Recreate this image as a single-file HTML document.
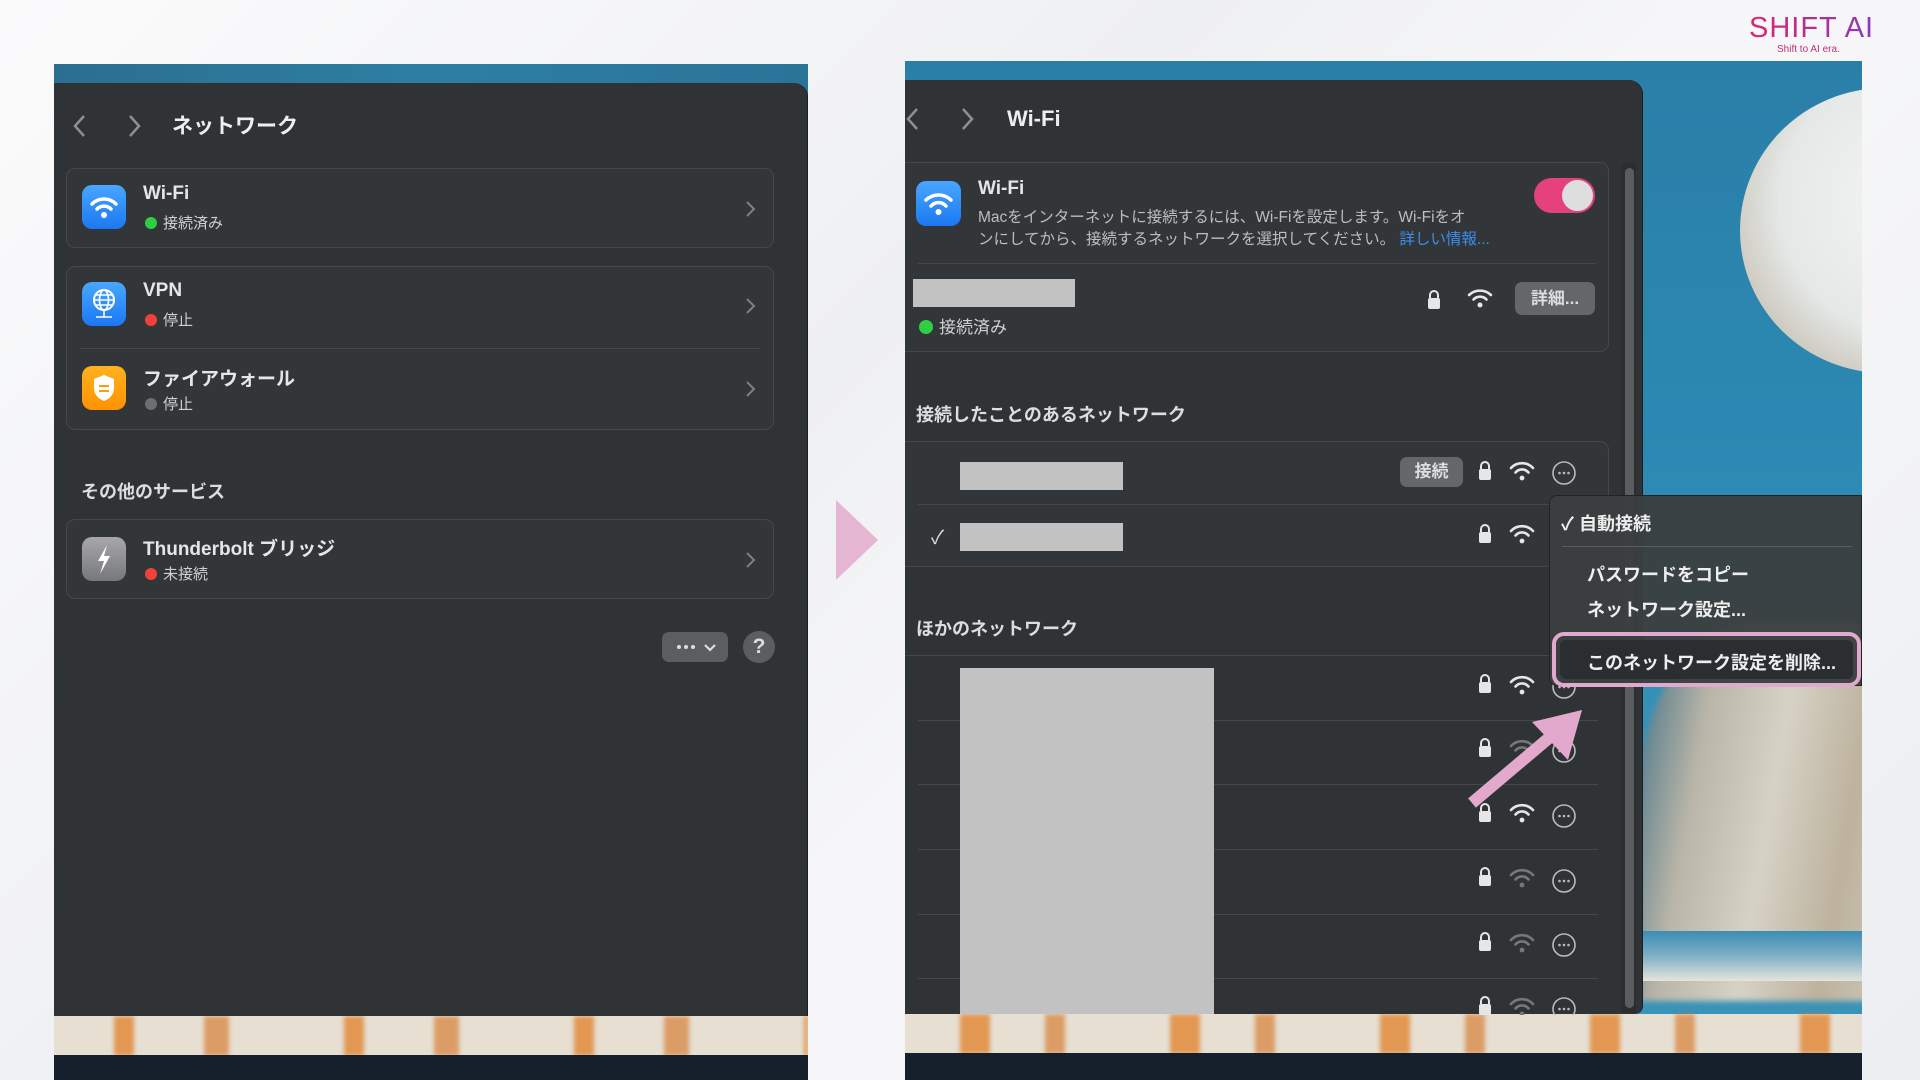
<!DOCTYPE html>
<html><head><meta charset="utf-8">
<style>
*{margin:0;padding:0;box-sizing:border-box}
body{width:1920px;height:1080px;overflow:hidden;position:relative;font-family:"Liberation Sans","Noto Sans CJK JP",sans-serif;background:linear-gradient(135deg,#fbfbfc 0%,#eff0f3 40%,#f7f7f9 60%,#eceef1 100%);color:#e6e6e6}
.abs{position:absolute}
.win{background:#303335;position:absolute}
.card{position:absolute;border:1px solid #45484a;border-radius:9px;background:#333638}
.t{position:absolute;white-space:nowrap}
.b{font-weight:bold}
.dot{display:inline-block;width:12px;height:12px;border-radius:50%;margin-right:6px;vertical-align:-1px}
.sep{position:absolute;height:1px;background:#45484a}
.gray{position:absolute;background:#c2c2c2}
.strip{background:linear-gradient(180deg,#e8e2d6 0%,#ddd5c6 50%,#c98a4a 100%);}
</style></head><body>

<!-- LEFT PANEL -->
<div class="abs" style="left:54px;top:64px;width:754px;height:1016px;background:#2a7395;overflow:hidden">
  <div class="abs" style="left:0;top:0;width:754px;height:20px;background:linear-gradient(90deg,#2b6f90,#2d7fa2,#2a7498)"></div>
  <div class="abs" style="left:0;top:952px;width:754px;height:40px;background:#e6dfd2"></div>
  <div class="abs" style="left:0;top:952px;width:754px;height:40px;background:repeating-linear-gradient(90deg,transparent 0 60px,rgba(224,128,40,.75) 60px 80px,transparent 80px 150px,rgba(214,112,30,.6) 150px 175px,transparent 175px 230px);filter:blur(2px)"></div>
  <div class="abs" style="left:0;top:991px;width:754px;height:25px;background:#15202c"></div>
</div>
<div class="win" style="left:54px;top:83px;width:754px;height:933px;border-top-right-radius:14px;border-right:1px solid #1c1d1e"></div>

<svg class="abs" style="left:70px;top:112px" width="80" height="28"><path d="M14 4 L5 14 L14 24" stroke="#8d8f91" stroke-width="2.5" fill="none"/><path d="M60 4 L69 14 L60 24" stroke="#8d8f91" stroke-width="2.5" fill="none"/></svg>
<div class="t b" style="left:172px;top:110px;font-size:21px;color:#eee">ネットワーク</div>

<div class="card" style="left:66px;top:168px;width:708px;height:80px"></div>
<svg class="abs" style="left:82px;top:185px" width="44" height="44"><defs><linearGradient id="bl" x1="0" y1="0" x2="0" y2="1"><stop offset="0" stop-color="#4aa6ff"/><stop offset="1" stop-color="#1b78f2"/></linearGradient></defs><rect width="44" height="44" rx="10" fill="url(#bl)"/><path d="M10 19 A17 17 0 0 1 34 19" stroke="#fff" stroke-width="3.5" fill="none" stroke-linecap="round"/><path d="M15 24 A10 10 0 0 1 29 24" stroke="#fff" stroke-width="3.5" fill="none" stroke-linecap="round"/><circle cx="22" cy="30" r="3" fill="#fff"/></svg>
<div class="t b" style="left:143px;top:183px;font-size:19px">Wi-Fi</div>
<div class="t" style="left:145px;top:212px;font-size:15px;color:#cfcfcf"><span class="dot" style="background:#2fcf45"></span>接続済み</div>
<svg class="abs" style="left:745px;top:200px" width="12" height="18"><path d="M2 2 L9 9 L2 16" stroke="#7d8082" stroke-width="2" fill="none"/></svg>

<div class="card" style="left:66px;top:266px;width:708px;height:164px"></div>
<div class="sep" style="left:80px;top:348px;width:680px"></div>
<svg class="abs" style="left:82px;top:282px" width="44" height="44"><rect width="44" height="44" rx="10" fill="url(#bl)"/><circle cx="22" cy="18" r="10" stroke="#fff" stroke-width="2" fill="none"/><ellipse cx="22" cy="18" rx="4.5" ry="10" stroke="#fff" stroke-width="1.6" fill="none"/><path d="M12 18 H32 M14 13 H30 M14 23 H30 M22 28 V35 M14 35 H30" stroke="#fff" stroke-width="1.6"/></svg>
<div class="t b" style="left:143px;top:280px;font-size:19px">VPN</div>
<div class="t" style="left:145px;top:309px;font-size:15px;color:#cfcfcf"><span class="dot" style="background:#f0423b"></span>停止</div>
<svg class="abs" style="left:745px;top:297px" width="12" height="18"><path d="M2 2 L9 9 L2 16" stroke="#7d8082" stroke-width="2" fill="none"/></svg>
<svg class="abs" style="left:82px;top:366px" width="44" height="44"><defs><linearGradient id="or" x1="0" y1="0" x2="0" y2="1"><stop offset="0" stop-color="#ffb21e"/><stop offset="1" stop-color="#ff9300"/></linearGradient></defs><rect width="44" height="44" rx="10" fill="url(#or)"/><path d="M22 9 L32 13 V22 C32 29 27 33 22 35 C17 33 12 29 12 22 V13 Z" fill="#fff"/><path d="M17 20 H27 M17 25 H27" stroke="#ff9d0a" stroke-width="2"/></svg>
<div class="t b" style="left:143px;top:364px;font-size:19px">ファイアウォール</div>
<div class="t" style="left:145px;top:393px;font-size:15px;color:#cfcfcf"><span class="dot" style="background:#6c6e70"></span>停止</div>
<svg class="abs" style="left:745px;top:380px" width="12" height="18"><path d="M2 2 L9 9 L2 16" stroke="#7d8082" stroke-width="2" fill="none"/></svg>

<div class="t b" style="left:81px;top:478px;font-size:18px;color:#ddd">その他のサービス</div>
<div class="card" style="left:66px;top:519px;width:708px;height:80px"></div>
<svg class="abs" style="left:82px;top:537px" width="44" height="44"><defs><linearGradient id="gr" x1="0" y1="0" x2="0" y2="1"><stop offset="0" stop-color="#a8a8aa"/><stop offset="1" stop-color="#77787a"/></linearGradient></defs><rect width="44" height="44" rx="10" fill="url(#gr)"/><path d="M25 8 L16 24 H22 L18 37 L28 19 H22 Z" fill="#fff"/></svg>
<div class="t b" style="left:143px;top:534px;font-size:19px">Thunderbolt ブリッジ</div>
<div class="t" style="left:145px;top:563px;font-size:15px;color:#cfcfcf"><span class="dot" style="background:#f0423b"></span>未接続</div>
<svg class="abs" style="left:745px;top:551px" width="12" height="18"><path d="M2 2 L9 9 L2 16" stroke="#7d8082" stroke-width="2" fill="none"/></svg>

<div class="abs" style="left:662px;top:632px;width:66px;height:30px;border-radius:7px;background:#5b5e60"></div>
<svg class="abs" style="left:662px;top:632px" width="66" height="30"><circle cx="17" cy="15" r="2" fill="#ddd"/><circle cx="24" cy="15" r="2" fill="#ddd"/><circle cx="31" cy="15" r="2" fill="#ddd"/><path d="M43 13 L48 18 L53 13" stroke="#ddd" stroke-width="2.2" fill="none"/></svg>
<div class="abs" style="left:743px;top:631px;width:32px;height:32px;border-radius:50%;background:#5b5e60;color:#ddd;font-size:21px;text-align:center;line-height:32px;font-weight:bold">?</div>

<svg class="abs" style="left:836px;top:500px" width="44" height="80"><path d="M0 0 L42 40 L0 80 Z" fill="#e4b6d1"/></svg>

<!-- RIGHT PANEL bg -->
<div class="abs" style="left:905px;top:61px;width:957px;height:1019px;background:linear-gradient(180deg,#2a7fa8 0%,#2c8cb6 50%,#3a93b8 70%);overflow:hidden">
  <div class="abs" style="left:835px;top:27px;width:290px;height:285px;border-radius:50%;background:radial-gradient(circle at 60% 40%,#f4f6f5 0%,#e4e8e6 55%,#c9c4b8 80%,#b3ab9c 100%)"></div>
  <div class="abs" style="left:735px;top:560px;width:260px;height:380px;background:linear-gradient(100deg,#3f6f85 0%,#b9b5a8 25%,#d6d2c6 50%,#bdb29d 75%,#cfcbbf 100%);border-radius:45% 0 0 0;filter:blur(3px)"></div>
  <div class="abs" style="left:735px;top:870px;width:240px;height:50px;background:linear-gradient(180deg,#3c8db5,#7fb0c4 50%,#e6e3dc)"></div>
  <div class="abs" style="left:0;top:953px;width:957px;height:40px;background:#e6dfd2"></div>
  <div class="abs" style="left:0;top:953px;width:957px;height:40px;background:repeating-linear-gradient(90deg,transparent 0 55px,rgba(224,128,40,.75) 55px 85px,transparent 85px 140px,rgba(214,112,30,.6) 140px 160px,transparent 160px 210px);filter:blur(2px)"></div>
  <div class="abs" style="left:0;top:992px;width:957px;height:27px;background:#15202c"></div>
</div>
<div class="win" style="left:905px;top:80px;width:738px;height:934px;border-top-right-radius:14px;border-bottom-right-radius:8px;border-right:1px solid #1c1d1e"></div>

<svg class="abs" style="left:903px;top:105px" width="90" height="28"><path d="M14 4 L5 14 L14 24" stroke="#8d8f91" stroke-width="2.5" fill="none"/><path d="M60 4 L69 14 L60 24" stroke="#8d8f91" stroke-width="2.5" fill="none"/></svg>
<div class="t b" style="left:1007px;top:106px;font-size:22px;color:#eee">Wi-Fi</div>

<div class="abs" style="left:1622px;top:163px;width:14px;height:850px;background:#2b2d2f"></div>
<div class="abs" style="left:1625px;top:168px;width:9px;height:840px;border-radius:5px;background:#5a5d5f"></div>

<div class="card" style="left:905px;top:162px;width:704px;height:190px;border-left:none;border-radius:0 9px 9px 0"></div>
<svg class="abs" style="left:916px;top:181px" width="45" height="45"><rect width="45" height="45" rx="10" fill="url(#bl)"/><path d="M10 19 A18 18 0 0 1 35 19" stroke="#fff" stroke-width="3.5" fill="none" stroke-linecap="round"/><path d="M15 25 A10 10 0 0 1 30 25" stroke="#fff" stroke-width="3.5" fill="none" stroke-linecap="round"/><circle cx="22.5" cy="31" r="3" fill="#fff"/></svg>
<div class="t b" style="left:978px;top:178px;font-size:19px">Wi-Fi</div>
<div class="t" style="left:978px;top:207px;font-size:15.5px;color:#bdbdbd;line-height:22px">Macをインターネットに接続するには、Wi-Fiを設定します。Wi-Fiをオ<br>ンにしてから、接続するネットワークを選択してください。 <span style="color:#3a8ef0">詳しい情報...</span></div>
<div class="abs" style="left:1534px;top:178px;width:61px;height:35px;border-radius:18px;background:#e5417c"></div>
<div class="abs" style="left:1562px;top:180px;width:31px;height:31px;border-radius:50%;background:#dedede"></div>
<div class="sep" style="left:918px;top:263px;width:678px"></div>
<div class="gray" style="left:913px;top:279px;width:162px;height:28px"></div>
<div class="t" style="left:919px;top:313px;font-size:17px;color:#cfcfcf"><span class="dot" style="background:#2fcf45;width:14px;height:14px"></span>接続済み</div>
<svg class="abs" style="left:1426px;top:288px" width="16" height="22"><path d="M4 10 V7 A4 4 0 0 1 12 7 V10" stroke="#e6e6e6" stroke-width="2" fill="none"/><rect x="2" y="10" width="12" height="11" rx="2" fill="#e6e6e6"/></svg>
<svg class="abs" style="left:1467px;top:287px" width="26" height="22"><path d="M2 8 A16 16 0 0 1 24 8" stroke="#e6e6e6" stroke-width="2.6" fill="none" stroke-linecap="round"/><path d="M6.5 12.5 A9 9 0 0 1 19.5 12.5" stroke="#e6e6e6" stroke-width="2.6" fill="none" stroke-linecap="round"/><circle cx="13" cy="18" r="2.5" fill="#e6e6e6"/></svg>
<div class="abs b" style="left:1515px;top:282px;width:80px;height:33px;border-radius:7px;background:#64676a;color:#ddd;font-size:17px;text-align:center;line-height:33px">詳細...</div>

<div class="t b" style="left:916px;top:401px;font-size:18px;color:#ddd">接続したことのあるネットワーク</div>
<div class="card" style="left:905px;top:441px;width:704px;height:126px;border-left:none;border-radius:0 9px 9px 0"></div>
<div class="gray" style="left:960px;top:462px;width:163px;height:28px"></div>
<div class="abs b" style="left:1400px;top:457px;width:63px;height:30px;border-radius:7px;background:#64676a;color:#ddd;font-size:17px;text-align:center;line-height:30px">接続</div>
<div class="sep" style="left:918px;top:504px;width:680px"></div>
<div class="t" style="left:931px;top:523px;font-size:19px;color:#ddd">✓</div>
<div class="gray" style="left:960px;top:523px;width:163px;height:28px"></div>

<div class="t b" style="left:916px;top:615px;font-size:18px;color:#ddd">ほかのネットワーク</div>
<div class="sep" style="left:905px;top:655px;width:705px"></div>
<div class="sep" style="left:918px;top:720px;width:680px"></div>
<div class="sep" style="left:918px;top:784px;width:680px"></div>
<div class="sep" style="left:918px;top:849px;width:680px"></div>
<div class="sep" style="left:918px;top:914px;width:680px"></div>
<div class="sep" style="left:918px;top:978px;width:680px"></div>
<div class="gray" style="left:960px;top:668px;width:254px;height:346px"></div>

<svg class="abs" style="left:1470px;top:455px" width="120" height="560">
 <defs>
  <g id="lk"><path d="M-4 -1 V-4 A4 4 0 0 1 4 -4 V-1" stroke="#e6e6e6" stroke-width="2" fill="none"/><rect x="-6" y="-1" width="12" height="11" rx="2" fill="#e6e6e6"/></g>
  <g id="wf"><path d="M-11 -3 A15 15 0 0 1 11 -3" stroke-width="2.6" fill="none" stroke-linecap="round"/><path d="M-6.5 1.5 A8.5 8.5 0 0 1 6.5 1.5" stroke-width="2.6" fill="none" stroke-linecap="round"/><circle cx="0" cy="7" r="2.4" stroke="none"/></g>
  <g id="mo"><circle r="11" stroke="#bbb" stroke-width="1.6" fill="none"/><circle cx="-4.5" r="1.3" fill="#bbb"/><circle r="1.3" fill="#bbb"/><circle cx="4.5" r="1.3" fill="#bbb"/></g>
 </defs>
 <use href="#lk" x="15" y="15"/><use href="#wf" x="52" y="16" stroke="#e6e6e6" fill="#e6e6e6"/><use href="#mo" x="94" y="18"/>
 <use href="#lk" x="15" y="78"/><use href="#wf" x="52" y="79" stroke="#e6e6e6" fill="#e6e6e6"/>
 <use href="#lk" x="15" y="228"/><use href="#wf" x="52" y="230" stroke="#e6e6e6" fill="#e6e6e6"/><use href="#mo" x="94" y="232"/>
 <use href="#lk" x="15" y="292"/><use href="#wf" x="52" y="294" stroke="#777" fill="#777"/><use href="#mo" x="94" y="296"/>
 <use href="#lk" x="15" y="357"/><use href="#wf" x="52" y="358" stroke="#e6e6e6" fill="#e6e6e6"/><use href="#mo" x="94" y="361"/>
 <use href="#lk" x="15" y="421"/><use href="#wf" x="52" y="423" stroke="#777" fill="#777"/><use href="#mo" x="94" y="426"/>
 <use href="#lk" x="15" y="486"/><use href="#wf" x="52" y="488" stroke="#777" fill="#777"/><use href="#mo" x="94" y="490"/>
 <use href="#lk" x="15" y="550"/><use href="#wf" x="52" y="552" stroke="#777" fill="#777"/><use href="#mo" x="94" y="554"/>
</svg>

<div class="abs" style="left:1549px;top:495px;width:313px;height:191px;background:rgba(58,62,64,0.96);border-radius:8px 0 0 8px;border:1px solid #222"></div>
<div class="t b" style="left:1561px;top:510px;font-size:18px;color:#eee">✓ 自動接続</div>
<div class="abs" style="left:1562px;top:546px;width:290px;height:1px;background:#5a5e60"></div>
<div class="t b" style="left:1587px;top:561px;font-size:18px;color:#eee">パスワードをコピー</div>
<div class="t b" style="left:1587px;top:596px;font-size:18px;color:#eee">ネットワーク設定...</div>
<div class="abs" style="left:1552px;top:632px;width:309px;height:55px;border:4px solid #e0a9cd;border-radius:12px"></div>
<div class="abs" style="left:1560px;top:640px;width:293px;height:39px;background:#2b2e30;border-radius:6px"></div>
<div class="t b" style="left:1587px;top:649px;font-size:18px;color:#eee">このネットワーク設定を削除...</div>

<svg class="abs" style="left:1460px;top:700px" width="140" height="115"><path d="M12 103 L96 32" stroke="#e2a9cc" stroke-width="12" stroke-linecap="butt"/><path d="M122 10 L72 22 L108 60 Z" fill="#e2a9cc"/></svg>

<div class="t" style="left:1749px;top:12px;font-size:29px;letter-spacing:1px;background:linear-gradient(90deg,#e0246e,#8a3ab8);-webkit-background-clip:text;background-clip:text;color:transparent">SHIFT AI</div>
<div class="t" style="left:1777px;top:44px;font-size:10px;color:#c03070">Shift to AI era.</div>
</body></html>
